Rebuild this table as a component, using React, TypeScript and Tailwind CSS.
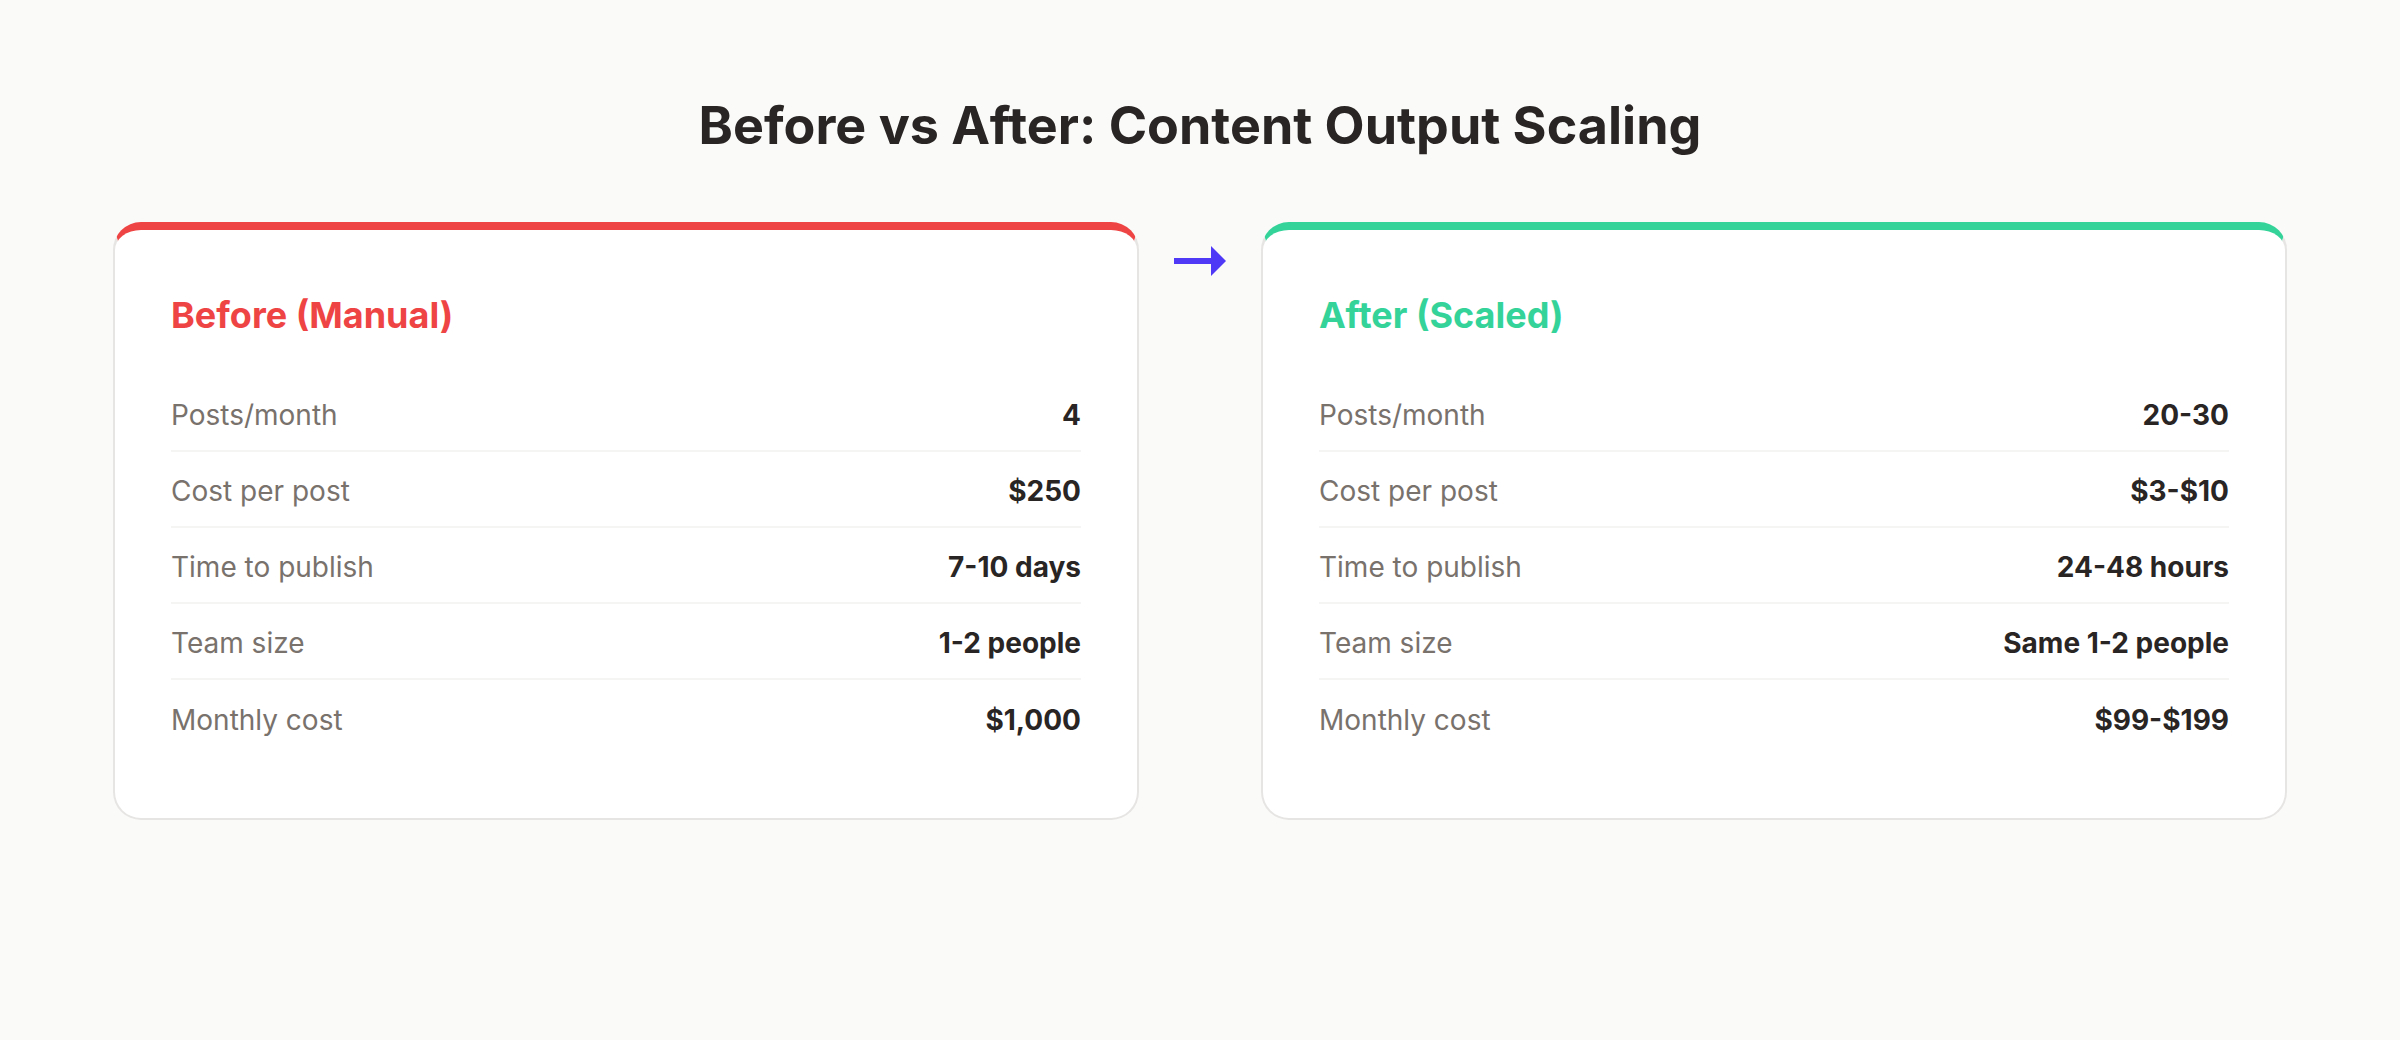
const beforeRows = [
  { label: 'Posts/month', value: '4' },
  { label: 'Cost per post', value: '$250' },
  { label: 'Time to publish', value: '7-10 days' },
  { label: 'Team size', value: '1-2 people' },
  { label: 'Monthly cost', value: '$1,000' },
]

const afterRows = [
  { label: 'Posts/month', value: '20-30' },
  { label: 'Cost per post', value: '$3-$10' },
  { label: 'Time to publish', value: '24-48 hours' },
  { label: 'Team size', value: 'Same 1-2 people' },
  { label: 'Monthly cost', value: '$99-$199' },
]

type Row = { label: string; value: string }

const Card = ({ title, rows, variant }: { title: string; rows: Row[]; variant: 'before' | 'after' }) => {
  const accent = variant === 'before' ? 'border-t-[#ef4444]' : 'border-t-[#34d399]'
  const titleColor = variant === 'before' ? 'text-[#ef4444]' : 'text-[#34d399]'

  return (
    <div
      className={`w-[1026px] shrink-0 rounded-[28px] border-2 border-t-8 border-[#e7e5e4] ${accent} bg-white px-14 pt-[65px] pb-[62px]`}
    >
      <h2 className={`text-[36px] leading-[40px] font-bold ${titleColor}`}>{title}</h2>
      <div className="mt-[41px] flex flex-col">
        {rows.map((row, i) => (
          <div
            key={row.label}
            className={`flex h-[76px] items-center justify-between pt-[4px] ${
              i < rows.length - 1 ? 'border-b-2 border-[#f5f5f4]' : ''
            }`}
          >
            <span className="text-[28px] text-[#78716c]">{row.label}</span>
            <span className="text-[28px] font-bold text-[#292524]">{row.value}</span>
          </div>
        ))}
      </div>
    </div>
  )
}

const Arrow = () => (
  <svg width="52" height="30" viewBox="0 0 52 30" className="mt-[24px] shrink-0">
    <rect x="0" y="12" width="38" height="6" fill="#4f39f6" />
    <polygon points="37,0 52,15 37,30" fill="#4f39f6" />
  </svg>
)

export default function App() {
  return (
    <div
      className="min-h-[1040px] w-full bg-[#fafaf9] pt-[100px]"
      style={{ fontFamily: 'Inter, "Noto Sans", sans-serif' }}
    >
      <h1 className="text-center text-[52px] leading-[52px] font-bold text-[#292524]">
        Before vs After: Content Output Scaling
      </h1>
      <div className="mt-[70px] flex items-start justify-center gap-[35px]">
        <Card title="Before (Manual)" rows={beforeRows} variant="before" />
        <Arrow />
        <Card title="After (Scaled)" rows={afterRows} variant="after" />
      </div>
    </div>
  )
}
